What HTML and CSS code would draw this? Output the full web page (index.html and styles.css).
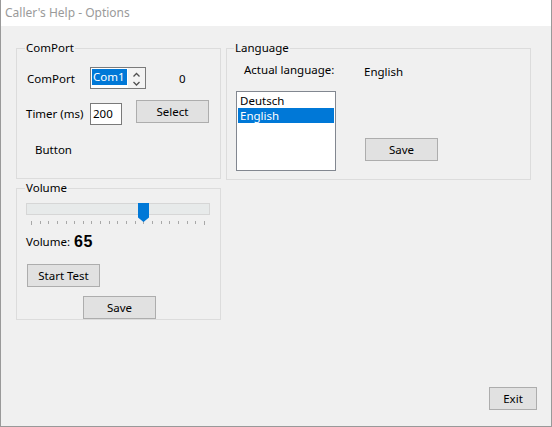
FILE: index.html
```html
<!DOCTYPE html>
<html>
<head>
<meta charset="utf-8">
<link rel="stylesheet" href="styles.css">
</head>
<body>
<div class="window">
  <div class="titlebar">Caller's Help - Options</div>
  <div class="main">
    <div class="col-left">
      <fieldset class="group group-com">
        <legend>ComPort</legend>
        <div class="group-body">
          <div class="row row-port">
            <span class="label">ComPort</span>
            <div class="spin">
              <span class="spin-value">Com1</span>
              <span class="spin-arrows">
                <svg width="16" height="20" viewBox="0 0 16 20"><polyline points="5.5,8.5 8.5,5.5 11.5,8.5" fill="none" stroke="#505050" stroke-width="1.3"/><polyline points="5.5,14 8.5,17 11.5,14" fill="none" stroke="#505050" stroke-width="1.3"/></svg>
              </span>
            </div>
            <span class="port-count">0</span>
          </div>
          <div class="row row-timer">
            <span class="label label-timer">Timer (ms)</span>
            <div class="textbox">200</div>
            <button class="btn btn-select">Select</button>
          </div>
          <div class="status">Button</div>
        </div>
      </fieldset>
      <fieldset class="group group-volume">
        <legend>Volume</legend>
        <div class="group-body">
          <div class="slider">
            <div class="track"></div>
            <svg class="thumb" width="11" height="19" viewBox="0 0 11 19"><path d="M0 0H11V14.5L5.5 19L0 14.5Z" fill="#0078d7"/></svg>
            <div class="ticks">
              <span class="tick end"></span><span class="tick"></span><span class="tick"></span><span class="tick"></span><span class="tick"></span><span class="tick"></span><span class="tick"></span><span class="tick"></span><span class="tick"></span><span class="tick"></span><span class="tick"></span><span class="tick"></span><span class="tick"></span><span class="tick"></span><span class="tick"></span><span class="tick"></span><span class="tick"></span><span class="tick"></span><span class="tick"></span><span class="tick"></span><span class="tick end"></span>
            </div>
          </div>
          <div class="volume-row">
            <span class="volume-label">Volume:</span>
            <span class="volume-value">65</span>
          </div>
          <button class="btn btn-test">Start Test</button>
          <button class="btn btn-save-vol">Save</button>
        </div>
      </fieldset>
    </div>
    <fieldset class="group group-lang">
      <legend>Language</legend>
      <div class="row row-actual">
        <span class="actual-label">Actual language:</span>
        <span class="actual-value">English</span>
      </div>
      <div class="row row-list">
        <div class="listbox">
          <div class="item">Deutsch</div>
          <div class="item selected">English</div>
        </div>
        <button class="btn btn-save-lang">Save</button>
      </div>
    </fieldset>
  </div>
  <div class="footer">
    <button class="btn btn-exit">Exit</button>
  </div>
</div>
</body>
</html>
```

FILE: styles.css
```css
* {
  box-sizing: border-box;
}

html, body {
  margin: 0;
  padding: 0;
  background: #f0f0f0;
}

body {
  font-family: "Noto Sans", "Segoe UI", sans-serif;
  font-size: 11.5px;
  color: #000;
}

.window {
  width: 552px;
  height: 427px;
  border-left: 1px solid #999;
  border-right: 1px solid #999;
  border-bottom: 1px solid #999;
  background: #f0f0f0;
  display: flex;
  flex-direction: column;
}

.titlebar {
  height: 26px;
  background: #fff;
  color: #9a9a9a;
  font-size: 12px;
  line-height: 26px;
  padding-left: 4px;
}

.main {
  display: flex;
  gap: 5px;
  padding: 14px 0 0 15px;
}

.col-left {
  display: flex;
  flex-direction: column;
  gap: 1px;
  width: 205px;
}

.group {
  margin: 0;
  padding: 0;
  min-width: 0;
  border: 1px solid #dcdcdc;
}

.group legend {
  margin-left: 8px;
  padding: 0 1px;
  line-height: 16px;
}

.group-body {
  padding-left: 9px;
}

.group-com {
  width: 205px;
  height: 139px;
}

.group-volume {
  width: 205px;
  height: 140px;
}

.group-lang {
  width: 305px;
  height: 140px;
}

.group-lang legend {
  margin-left: 7px;
}

.row {
  display: flex;
}

.row-port {
  margin-top: 11px;
  height: 22px;
  align-items: center;
}

.label {
  width: 64px;
  padding-left: 1px;
}

.spin {
  display: flex;
  width: 56px;
  height: 22px;
  border: 1px solid #7a7a7a;
  background: #fff;
}

.spin-value {
  margin: 1px;
  width: 35px;
  height: 16px;
  line-height: 16px;
  background: #0078d7;
  color: #fff;
  padding-left: 1px;
}

.spin-arrows {
  display: flex;
  flex: 1;
  background: #f3f3f3;
}

.port-count {
  margin-left: 33px;
}

.row-timer {
  margin-top: 11px;
  height: 25px;
  align-items: flex-start;
}

.label-timer {
  margin-top: 3px;
  line-height: 22px;
  padding-left: 0;
}

.textbox {
  margin-top: 3px;
  width: 32px;
  height: 22px;
  border: 1px solid #7a7a7a;
  background: #fff;
  line-height: 20px;
  padding-left: 2px;
}

.btn {
  display: block;
  font-family: inherit;
  font-size: 11.5px;
  color: #000;
  width: 73px;
  height: 23px;
  padding: 0;
  margin: 0;
  background: #e1e1e1;
  border: 1px solid #adadad;
  border-radius: 0;
  line-height: 21px;
}

.btn-select {
  margin-left: 14px;
}

.status {
  margin-top: 17px;
  margin-left: 9px;
  line-height: 16px;
}

.slider {
  position: relative;
  margin-top: 7px;
  width: 184px;
  height: 24px;
}

.track {
  margin-top: 2px;
  height: 12px;
  border: 1px solid #d6d6d6;
  background: #e7eaea;
}

.thumb {
  position: absolute;
  left: 112px;
  top: 0;
}

.ticks {
  display: flex;
  justify-content: space-between;
  align-items: flex-start;
  margin-top: 6px;
  padding: 0 5px;
  height: 4px;
}

.tick {
  width: 1px;
  height: 3px;
  background: #a8a8a8;
}

.tick.end {
  height: 4px;
}

.volume-row {
  display: flex;
  align-items: flex-start;
  margin-top: 6px;
  height: 20px;
}

.volume-label {
  width: 48px;
  line-height: 16px;
  margin-top: 1px;
}

.volume-value {
  font-family: "Liberation Sans", Arial, sans-serif;
  font-weight: bold;
  font-size: 16px;
  line-height: 18px;
  letter-spacing: 0.5px;
}

.btn-test {
  margin-top: 11px;
  margin-left: 1px;
}

.btn-save-vol {
  margin-top: 9px;
  margin-left: 57px;
}

.row-actual {
  align-items: flex-start;
  margin-top: 6px;
  padding-left: 17px;
  height: 18px;
}

.actual-label {
  width: 120px;
  line-height: 16px;
}

.actual-value {
  margin-top: 2px;
  line-height: 16px;
}

.row-list {
  align-items: flex-start;
  margin-top: 11px;
  padding-left: 9px;
}

.listbox {
  width: 100px;
  height: 80px;
  border: 1px solid #828790;
  background: #fff;
  padding: 1px;
}

.item {
  height: 15px;
  line-height: 15px;
  padding-left: 2px;
}

.item.selected {
  background: #0078d7;
  color: #fff;
}

.btn-save-lang {
  margin-left: 29px;
  margin-top: 47px;
}

.footer {
  margin-top: auto;
  display: flex;
  justify-content: flex-end;
  padding: 0 14px 16px 0;
}

.btn-exit {
  width: 48px;
}
```
